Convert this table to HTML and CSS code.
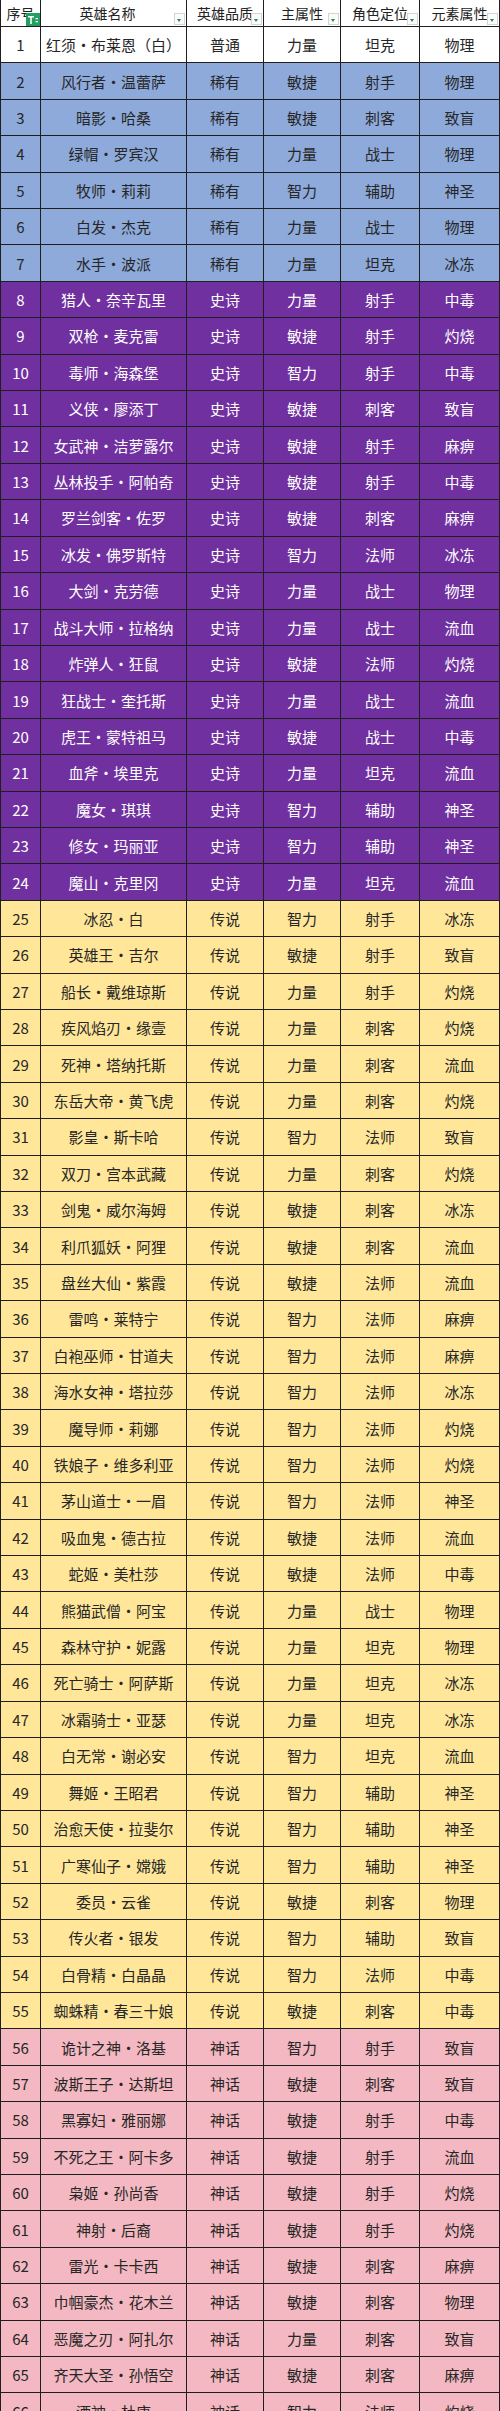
FILE: index.html
```html
<!DOCTYPE html>
<html lang="zh-CN">
<head>
<meta charset="utf-8">
<title>英雄列表</title>
<link rel="stylesheet" href="styles.css">
</head>
<body>
<div class="sheet">
  <div class="row head">
    <div class="c">序号<svg class="filter" viewBox="0 0 14 13" width="14" height="13"><rect width="14" height="13" fill="#21a060"/><path d="M2 3h6v1.6H5.8V11H4.2V4.6H2z" fill="#fff"/><path d="M9.5 5h2.5v1.2H9.5zM9.5 8h2.5v1.2H9.5z" fill="#fff"/></svg></div>
    <div class="c c2">英雄名称<span class="dd"></span></div>
    <div class="c">英雄品质<span class="dd"></span></div>
    <div class="c">主属性<span class="dd"></span></div>
    <div class="c">角色定位<span class="dd"></span></div>
    <div class="c">元素属性<span class="dd"></span></div>
  </div>

  <div class="row white"><div class="c">1</div><div class="c n">红须·布莱恩（白）</div><div class="c">普通</div><div class="c">力量</div><div class="c">坦克</div><div class="c">物理</div></div>

  <div class="row blue"><div class="c">2</div><div class="c n">风行者·温蕾萨</div><div class="c">稀有</div><div class="c">敏捷</div><div class="c">射手</div><div class="c">物理</div></div>
  <div class="row blue"><div class="c">3</div><div class="c n">暗影·哈桑</div><div class="c">稀有</div><div class="c">敏捷</div><div class="c">刺客</div><div class="c">致盲</div></div>
  <div class="row blue"><div class="c">4</div><div class="c n">绿帽·罗宾汉</div><div class="c">稀有</div><div class="c">力量</div><div class="c">战士</div><div class="c">物理</div></div>
  <div class="row blue"><div class="c">5</div><div class="c n">牧师·莉莉</div><div class="c">稀有</div><div class="c">智力</div><div class="c">辅助</div><div class="c">神圣</div></div>
  <div class="row blue"><div class="c">6</div><div class="c n">白发·杰克</div><div class="c">稀有</div><div class="c">力量</div><div class="c">战士</div><div class="c">物理</div></div>
  <div class="row blue"><div class="c">7</div><div class="c n">水手·波派</div><div class="c">稀有</div><div class="c">力量</div><div class="c">坦克</div><div class="c">冰冻</div></div>

  <div class="row purple"><div class="c">8</div><div class="c n">猎人·奈辛瓦里</div><div class="c">史诗</div><div class="c">力量</div><div class="c">射手</div><div class="c">中毒</div></div>
  <div class="row purple"><div class="c">9</div><div class="c n">双枪·麦克雷</div><div class="c">史诗</div><div class="c">敏捷</div><div class="c">射手</div><div class="c">灼烧</div></div>
  <div class="row purple"><div class="c">10</div><div class="c n">毒师·海森堡</div><div class="c">史诗</div><div class="c">智力</div><div class="c">射手</div><div class="c">中毒</div></div>
  <div class="row purple"><div class="c">11</div><div class="c n">义侠·廖添丁</div><div class="c">史诗</div><div class="c">敏捷</div><div class="c">刺客</div><div class="c">致盲</div></div>
  <div class="row purple"><div class="c">12</div><div class="c n">女武神·洁萝露尔</div><div class="c">史诗</div><div class="c">敏捷</div><div class="c">射手</div><div class="c">麻痹</div></div>
  <div class="row purple"><div class="c">13</div><div class="c n">丛林投手·阿帕奇</div><div class="c">史诗</div><div class="c">敏捷</div><div class="c">射手</div><div class="c">中毒</div></div>
  <div class="row purple"><div class="c">14</div><div class="c n">罗兰剑客·佐罗</div><div class="c">史诗</div><div class="c">敏捷</div><div class="c">刺客</div><div class="c">麻痹</div></div>
  <div class="row purple"><div class="c">15</div><div class="c n">冰发·佛罗斯特</div><div class="c">史诗</div><div class="c">智力</div><div class="c">法师</div><div class="c">冰冻</div></div>
  <div class="row purple"><div class="c">16</div><div class="c n">大剑·克劳德</div><div class="c">史诗</div><div class="c">力量</div><div class="c">战士</div><div class="c">物理</div></div>
  <div class="row purple"><div class="c">17</div><div class="c n">战斗大师·拉格纳</div><div class="c">史诗</div><div class="c">力量</div><div class="c">战士</div><div class="c">流血</div></div>
  <div class="row purple"><div class="c">18</div><div class="c n">炸弹人·狂鼠</div><div class="c">史诗</div><div class="c">敏捷</div><div class="c">法师</div><div class="c">灼烧</div></div>
  <div class="row purple"><div class="c">19</div><div class="c n">狂战士·奎托斯</div><div class="c">史诗</div><div class="c">力量</div><div class="c">战士</div><div class="c">流血</div></div>
  <div class="row purple"><div class="c">20</div><div class="c n">虎王·蒙特祖马</div><div class="c">史诗</div><div class="c">敏捷</div><div class="c">战士</div><div class="c">中毒</div></div>
  <div class="row purple"><div class="c">21</div><div class="c n">血斧·埃里克</div><div class="c">史诗</div><div class="c">力量</div><div class="c">坦克</div><div class="c">流血</div></div>
  <div class="row purple"><div class="c">22</div><div class="c n">魔女·琪琪</div><div class="c">史诗</div><div class="c">智力</div><div class="c">辅助</div><div class="c">神圣</div></div>
  <div class="row purple"><div class="c">23</div><div class="c n">修女·玛丽亚</div><div class="c">史诗</div><div class="c">智力</div><div class="c">辅助</div><div class="c">神圣</div></div>
  <div class="row purple"><div class="c">24</div><div class="c n">魔山·克里冈</div><div class="c">史诗</div><div class="c">力量</div><div class="c">坦克</div><div class="c">流血</div></div>

  <div class="row yellow"><div class="c">25</div><div class="c n">冰忍·白</div><div class="c">传说</div><div class="c">智力</div><div class="c">射手</div><div class="c">冰冻</div></div>
  <div class="row yellow"><div class="c">26</div><div class="c n">英雄王·吉尔</div><div class="c">传说</div><div class="c">敏捷</div><div class="c">射手</div><div class="c">致盲</div></div>
  <div class="row yellow"><div class="c">27</div><div class="c n">船长·戴维琼斯</div><div class="c">传说</div><div class="c">力量</div><div class="c">射手</div><div class="c">灼烧</div></div>
  <div class="row yellow"><div class="c">28</div><div class="c n">疾风焰刃·缘壹</div><div class="c">传说</div><div class="c">力量</div><div class="c">刺客</div><div class="c">灼烧</div></div>
  <div class="row yellow"><div class="c">29</div><div class="c n">死神·塔纳托斯</div><div class="c">传说</div><div class="c">力量</div><div class="c">刺客</div><div class="c">流血</div></div>
  <div class="row yellow"><div class="c">30</div><div class="c n">东岳大帝·黄飞虎</div><div class="c">传说</div><div class="c">力量</div><div class="c">刺客</div><div class="c">灼烧</div></div>
  <div class="row yellow"><div class="c">31</div><div class="c n">影皇·斯卡哈</div><div class="c">传说</div><div class="c">智力</div><div class="c">法师</div><div class="c">致盲</div></div>
  <div class="row yellow"><div class="c">32</div><div class="c n">双刀·宫本武藏</div><div class="c">传说</div><div class="c">力量</div><div class="c">刺客</div><div class="c">灼烧</div></div>
  <div class="row yellow"><div class="c">33</div><div class="c n">剑鬼·威尔海姆</div><div class="c">传说</div><div class="c">敏捷</div><div class="c">刺客</div><div class="c">冰冻</div></div>
  <div class="row yellow"><div class="c">34</div><div class="c n">利爪狐妖·阿狸</div><div class="c">传说</div><div class="c">敏捷</div><div class="c">刺客</div><div class="c">流血</div></div>
  <div class="row yellow"><div class="c">35</div><div class="c n">盘丝大仙·紫霞</div><div class="c">传说</div><div class="c">敏捷</div><div class="c">法师</div><div class="c">流血</div></div>
  <div class="row yellow"><div class="c">36</div><div class="c n">雷鸣·莱特宁</div><div class="c">传说</div><div class="c">智力</div><div class="c">法师</div><div class="c">麻痹</div></div>
  <div class="row yellow"><div class="c">37</div><div class="c n">白袍巫师·甘道夫</div><div class="c">传说</div><div class="c">智力</div><div class="c">法师</div><div class="c">麻痹</div></div>
  <div class="row yellow"><div class="c">38</div><div class="c n">海水女神·塔拉莎</div><div class="c">传说</div><div class="c">智力</div><div class="c">法师</div><div class="c">冰冻</div></div>
  <div class="row yellow"><div class="c">39</div><div class="c n">魔导师·莉娜</div><div class="c">传说</div><div class="c">智力</div><div class="c">法师</div><div class="c">灼烧</div></div>
  <div class="row yellow"><div class="c">40</div><div class="c n">铁娘子·维多利亚</div><div class="c">传说</div><div class="c">智力</div><div class="c">法师</div><div class="c">灼烧</div></div>
  <div class="row yellow"><div class="c">41</div><div class="c n">茅山道士·一眉</div><div class="c">传说</div><div class="c">智力</div><div class="c">法师</div><div class="c">神圣</div></div>
  <div class="row yellow"><div class="c">42</div><div class="c n">吸血鬼·德古拉</div><div class="c">传说</div><div class="c">敏捷</div><div class="c">法师</div><div class="c">流血</div></div>
  <div class="row yellow"><div class="c">43</div><div class="c n">蛇姬·美杜莎</div><div class="c">传说</div><div class="c">敏捷</div><div class="c">法师</div><div class="c">中毒</div></div>
  <div class="row yellow"><div class="c">44</div><div class="c n">熊猫武僧·阿宝</div><div class="c">传说</div><div class="c">力量</div><div class="c">战士</div><div class="c">物理</div></div>
  <div class="row yellow"><div class="c">45</div><div class="c n">森林守护·妮露</div><div class="c">传说</div><div class="c">力量</div><div class="c">坦克</div><div class="c">物理</div></div>
  <div class="row yellow"><div class="c">46</div><div class="c n">死亡骑士·阿萨斯</div><div class="c">传说</div><div class="c">力量</div><div class="c">坦克</div><div class="c">冰冻</div></div>
  <div class="row yellow"><div class="c">47</div><div class="c n">冰霜骑士·亚瑟</div><div class="c">传说</div><div class="c">力量</div><div class="c">坦克</div><div class="c">冰冻</div></div>
  <div class="row yellow"><div class="c">48</div><div class="c n">白无常·谢必安</div><div class="c">传说</div><div class="c">智力</div><div class="c">坦克</div><div class="c">流血</div></div>
  <div class="row yellow"><div class="c">49</div><div class="c n">舞姬·王昭君</div><div class="c">传说</div><div class="c">智力</div><div class="c">辅助</div><div class="c">神圣</div></div>
  <div class="row yellow"><div class="c">50</div><div class="c n">治愈天使·拉斐尔</div><div class="c">传说</div><div class="c">智力</div><div class="c">辅助</div><div class="c">神圣</div></div>
  <div class="row yellow"><div class="c">51</div><div class="c n">广寒仙子·嫦娥</div><div class="c">传说</div><div class="c">智力</div><div class="c">辅助</div><div class="c">神圣</div></div>
  <div class="row yellow"><div class="c">52</div><div class="c n">委员·云雀</div><div class="c">传说</div><div class="c">敏捷</div><div class="c">刺客</div><div class="c">物理</div></div>
  <div class="row yellow"><div class="c">53</div><div class="c n">传火者·银发</div><div class="c">传说</div><div class="c">智力</div><div class="c">辅助</div><div class="c">致盲</div></div>
  <div class="row yellow"><div class="c">54</div><div class="c n">白骨精·白晶晶</div><div class="c">传说</div><div class="c">智力</div><div class="c">法师</div><div class="c">中毒</div></div>
  <div class="row yellow"><div class="c">55</div><div class="c n">蜘蛛精·春三十娘</div><div class="c">传说</div><div class="c">敏捷</div><div class="c">刺客</div><div class="c">中毒</div></div>

  <div class="row pink"><div class="c">56</div><div class="c n">诡计之神·洛基</div><div class="c">神话</div><div class="c">智力</div><div class="c">射手</div><div class="c">致盲</div></div>
  <div class="row pink"><div class="c">57</div><div class="c n">波斯王子·达斯坦</div><div class="c">神话</div><div class="c">敏捷</div><div class="c">刺客</div><div class="c">致盲</div></div>
  <div class="row pink"><div class="c">58</div><div class="c n">黑寡妇·雅丽娜</div><div class="c">神话</div><div class="c">敏捷</div><div class="c">射手</div><div class="c">中毒</div></div>
  <div class="row pink"><div class="c">59</div><div class="c n">不死之王·阿卡多</div><div class="c">神话</div><div class="c">敏捷</div><div class="c">射手</div><div class="c">流血</div></div>
  <div class="row pink"><div class="c">60</div><div class="c n">枭姬·孙尚香</div><div class="c">神话</div><div class="c">敏捷</div><div class="c">射手</div><div class="c">灼烧</div></div>
  <div class="row pink"><div class="c">61</div><div class="c n">神射·后裔</div><div class="c">神话</div><div class="c">敏捷</div><div class="c">射手</div><div class="c">灼烧</div></div>
  <div class="row pink"><div class="c">62</div><div class="c n">雷光·卡卡西</div><div class="c">神话</div><div class="c">敏捷</div><div class="c">刺客</div><div class="c">麻痹</div></div>
  <div class="row pink"><div class="c">63</div><div class="c n">巾帼豪杰·花木兰</div><div class="c">神话</div><div class="c">敏捷</div><div class="c">刺客</div><div class="c">物理</div></div>
  <div class="row pink"><div class="c">64</div><div class="c n">恶魔之刃·阿扎尔</div><div class="c">神话</div><div class="c">力量</div><div class="c">刺客</div><div class="c">致盲</div></div>
  <div class="row pink"><div class="c">65</div><div class="c n">齐天大圣·孙悟空</div><div class="c">神话</div><div class="c">敏捷</div><div class="c">刺客</div><div class="c">麻痹</div></div>
  <div class="row pink"><div class="c">66</div><div class="c n">酒神·杜康</div><div class="c">神话</div><div class="c">智力</div><div class="c">法师</div><div class="c">灼烧</div></div>
</div>
</body>
</html>
```
FILE: styles.css
```css
html, body {
  margin: 0;
  padding: 0;
  background: #ffffff;
}

body {
  font-family: "Noto Sans CJK SC", "Noto Sans", sans-serif;
  font-size: 15px;
  color: #262626;
}

.sheet {
  width: 500px;
  box-sizing: border-box;
  display: flex;
  flex-direction: column;
  gap: 1px;
  padding: 0 1px;
  background: #1f1f1f;
}

.row {
  display: grid;
  grid-template-columns: 39px 145px 76px 76px 78px 79px;
  column-gap: 1px;
  height: 35.41px;
}

.c {
  display: flex;
  align-items: center;
  justify-content: center;
  white-space: nowrap;
  overflow: hidden;
  line-height: 1;
}

.n {
  font-variant-east-asian: full-width;
}

.head {
  height: 26px;
}

.head .c {
  background: #ffffff;
  position: relative;
  font-size: 14px;
  color: #222;
}

.head .c2 {
  padding-right: 12px;
}

.dd {
  position: absolute;
  right: 1px;
  bottom: 1px;
  width: 11px;
  height: 12px;
  box-sizing: border-box;
  background: #fbfbfb;
  border: 1px solid #d4d4d4;
}

.dd::after {
  content: "";
  position: absolute;
  left: 2px;
  top: 5px;
  border-left: 2.5px solid transparent;
  border-right: 2.5px solid transparent;
  border-top: 3px solid #1e8a4c;
}

.filter {
  position: absolute;
  right: 0;
  bottom: 0;
}

.white .c { background: #ffffff; }
.blue .c { background: #8eaadb; }
.purple .c { background: #7030a0; color: #ffffff; }
.yellow .c { background: #ffe699; }
.pink .c { background: #f3b8c1; }
```
